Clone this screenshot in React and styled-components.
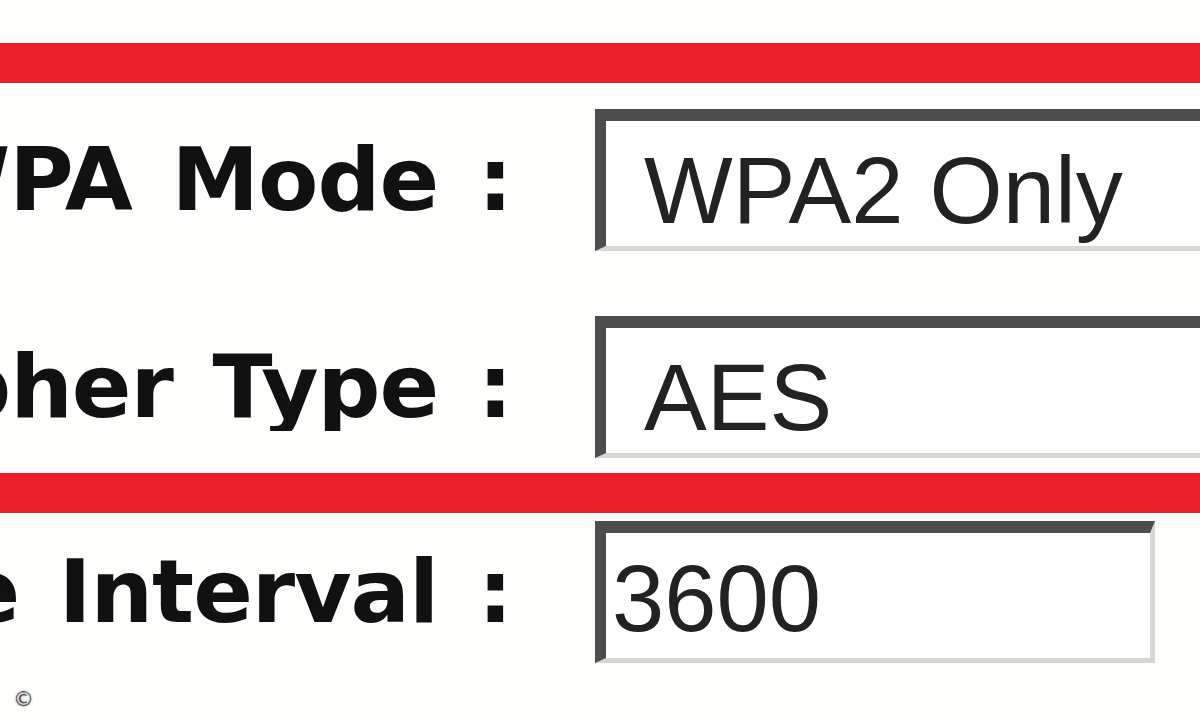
import React from 'react';
import styled, { createGlobalStyle } from 'styled-components';

const GlobalStyle = createGlobalStyle`
  html, body {
    margin: 0;
    padding: 0;
    background: #fefefc;
    overflow: hidden;
  }
`;

const securityRows = [
  { label: 'WPA Mode :', value: 'WPA2 Only', kind: 'select' },
  { label: 'Cipher Type :', value: 'AES', kind: 'select' },
];

const Page = styled.main`
  width: 1200px;
  height: 720px;
  padding-top: 43px;
  box-sizing: border-box;
  display: flex;
  flex-direction: column;
`;

// red frame around the WPA block, its sides run off the page
const Highlight = styled.section`
  border-top: 40px solid #eb1f27;
  border-bottom: 40px solid #eb1f27;
  padding: 26px 0 15px;
  display: flex;
  flex-direction: column;
  gap: 65px;
`;

const Row = styled.div`
  display: grid;
  grid-template-columns: 512px 1fr;
  column-gap: 83px;
  align-items: center;
  margin-top: ${({ $top }) => $top || 0}px;
`;

// labels are right-aligned and run off the left edge of the page
const Label = styled.label`
  display: flex;
  justify-content: flex-end;
  overflow: hidden;
  white-space: nowrap;
  font-family: 'DejaVu Sans', Verdana, sans-serif;
  font-weight: bold;
  font-size: 88px;
  letter-spacing: -1px;
  word-spacing: 10px;
  color: #111;
  line-height: 1;
`;

const Field = styled.div`
  box-sizing: border-box;
  width: ${({ $width }) => $width}px;
  height: 142px;
  display: flex;
  align-items: center;
  padding: ${({ $kind }) => ($kind === 'select' ? '14px 0 0 38px' : '6px 0 0 6px')};
  background: #fff;
  border-style: solid;
  border-width: 12px 5px 5px 11px;
  border-color: #4d4d4d #d8d6d0 #d8d6d0 #4d4d4d;
  font-family: 'Liberation Sans', Arial, sans-serif;
  font-size: 94px;
  color: #222;
  line-height: 1;
  white-space: nowrap;
`;

const Footer = styled.footer`
  margin-top: 24px;
  padding-left: 13px;
  font-family: 'DejaVu Sans', sans-serif;
  font-size: 21px;
  color: #555;
  text-shadow: 0 0 3px #999;
`;

const App = () => {
  return (
    <>
      <GlobalStyle />
      <Page>
        <Highlight>
          {securityRows.map(row => (
            <Row key={row.label}>
              <Label>{row.label}</Label>
              <Field $kind={row.kind} $width={720}>
                {row.value}
              </Field>
            </Row>
          ))}
        </Highlight>
        <Row $top={8}>
          <Label>Group Key Update Interval :</Label>
          <Field $kind="text" $width={560}>
            3600
          </Field>
        </Row>
        <Footer>©</Footer>
      </Page>
    </>
  );
};

export default App;
